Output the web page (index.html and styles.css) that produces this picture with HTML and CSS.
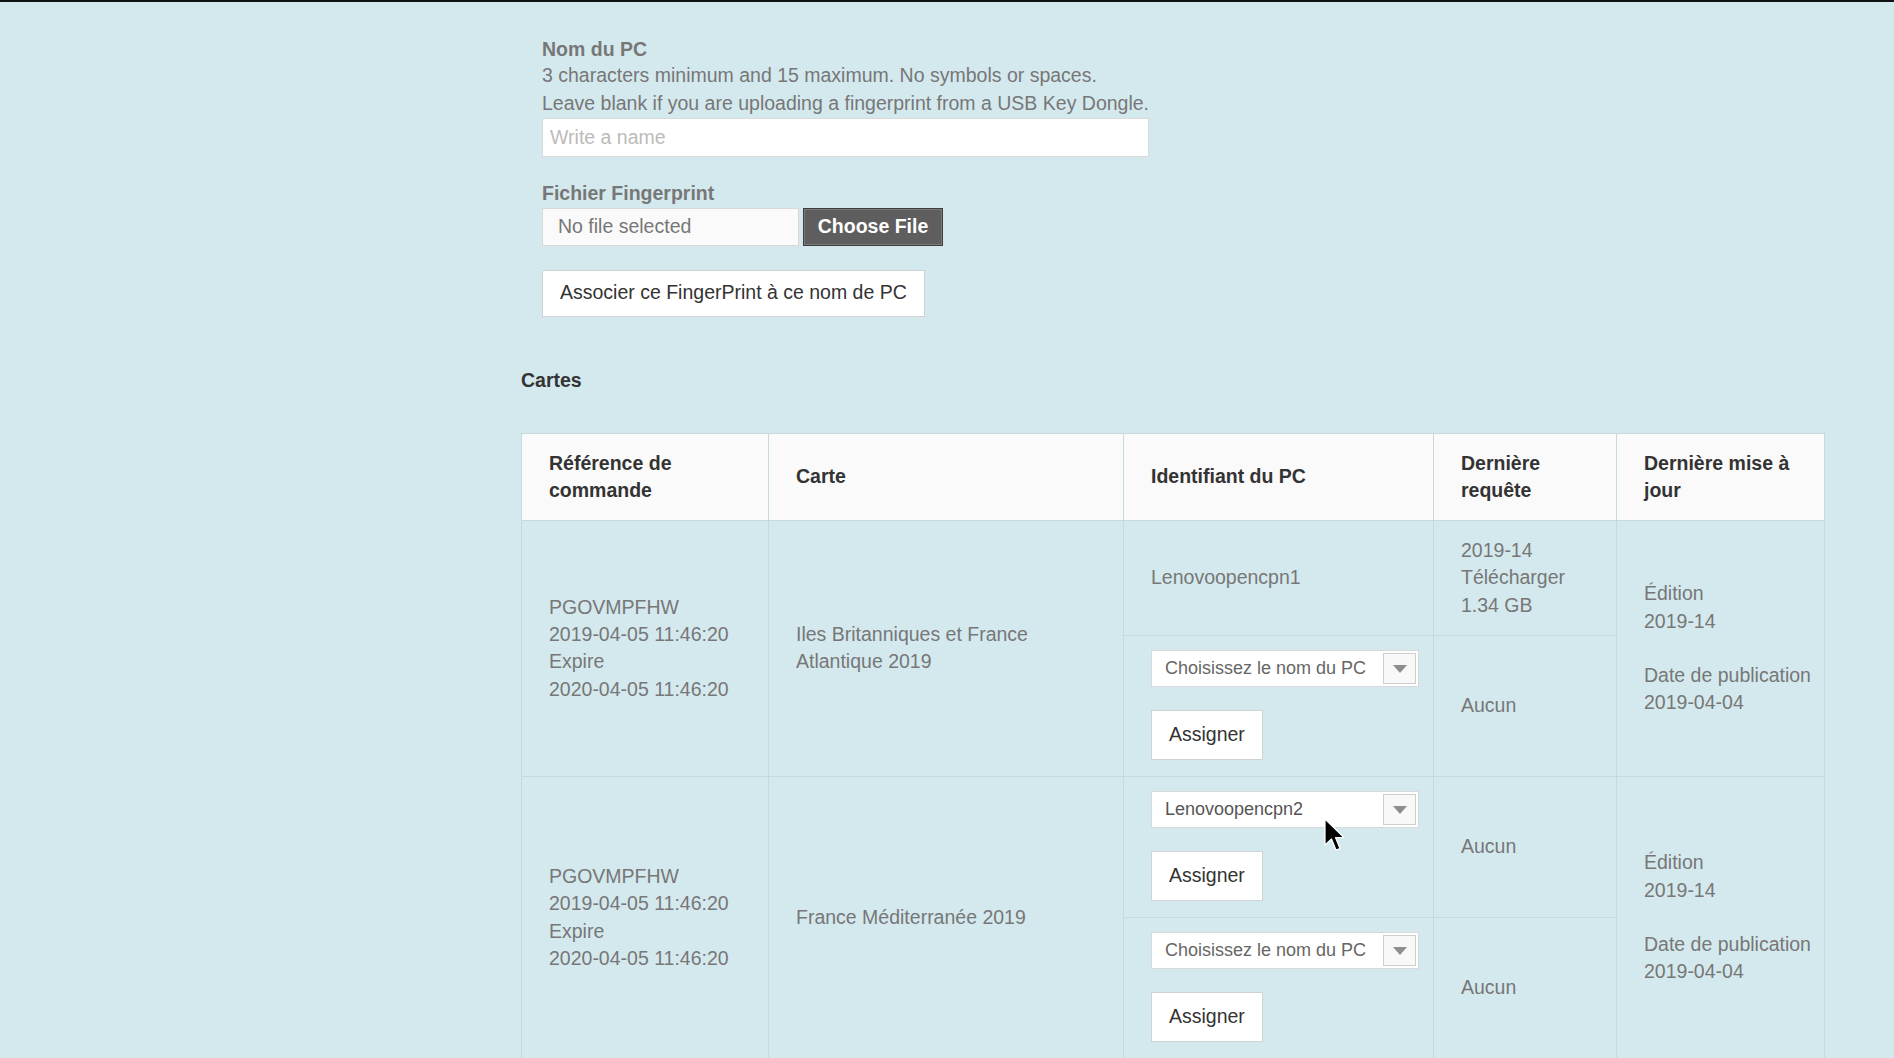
FILE: index.html
```html
<!DOCTYPE html>
<html lang="fr">
<head>
  <meta charset="UTF-8">
  <meta name="viewport" content="width=device-width, initial-scale=1.0">

  <title>Cartes</title>

  <link rel="stylesheet" href="styles.css">
</head>
<body>
  <div class="page">
    <form class="pc">
      <label class="pc__label" for="pcName">Nom du PC</label>
      <p class="pc__help">
        3 characters minimum and 15 maximum. No symbols or spaces.<br>
        Leave blank if you are uploading a fingerprint from a USB Key Dongle.
      </p>
      <input type="text" id="pcName" class="pc__field" placeholder="Write a name">

      <div class="pc__label pc__label--file">Fichier Fingerprint</div>
      <div class="file">
        <span class="file__name">No file selected</span>
        <span class="file__btn">Choose File</span>
      </div>

      <button type="button" class="btn btn--wide">Associer ce FingerPrint à ce nom de PC</button>
    </form>

    <h2 class="title">Cartes</h2>

    <table class="maps">
      <colgroup>
        <col class="maps__col-ref">
        <col class="maps__col-map">
        <col class="maps__col-pc">
        <col class="maps__col-req">
        <col class="maps__col-upd">
      </colgroup>
      <thead>
        <tr>
          <th>Référence de commande</th>
          <th>Carte</th>
          <th>Identifiant du PC</th>
          <th>Dernière requête</th>
          <th>Dernière mise à jour</th>
        </tr>
      </thead>
      <tbody>
        <tr>
          <td rowspan="2">PGOVMPFHW<br>2019-04-05 11:46:20<br>Expire<br>2020-04-05 11:46:20</td>
          <td rowspan="2">Iles Britanniques et France Atlantique 2019</td>
          <td>Lenovoopencpn1</td>
          <td>2019-14<br>Télécharger<br>1.34 GB</td>
          <td rowspan="2">
            <p class="maps__info">Édition<br>2019-14</p>
            <p class="maps__info">Date de publication<br>2019-04-04</p>
          </td>
        </tr>
        <tr>
          <td>
            <div class="picker"><span>Choisissez le nom du PC</span><span class="picker__arrow"></span></div>
            <button type="button" class="btn">Assigner</button>
          </td>
          <td>Aucun</td>
        </tr>

        <tr>
          <td rowspan="2">PGOVMPFHW<br>2019-04-05 11:46:20<br>Expire<br>2020-04-05 11:46:20</td>
          <td rowspan="2">France Méditerranée 2019</td>
          <td>
            <div class="picker picker--set"><span>Lenovoopencpn2</span><span class="picker__arrow"></span></div>
            <button type="button" class="btn">Assigner</button>
          </td>
          <td>Aucun</td>
          <td rowspan="2">
            <p class="maps__info">Édition<br>2019-14</p>
            <p class="maps__info">Date de publication<br>2019-04-04</p>
          </td>
        </tr>
        <tr>
          <td>
            <div class="picker"><span>Choisissez le nom du PC</span><span class="picker__arrow"></span></div>
            <button type="button" class="btn">Assigner</button>
          </td>
          <td>Aucun</td>
        </tr>
      </tbody>
    </table>
  </div>

  <!-- mouse pointer visible in the capture -->
  <svg class="cursor" width="22" height="36" viewBox="0 0 22 36">
    <path d="M1 1 L1 27 L7.5 21 L12 32 L16 30.5 L11.5 19.5 L20 19.5 Z" fill="#000" stroke="#fff" stroke-width="1.2" stroke-linejoin="round"/>
  </svg>
</body>
</html>
```

FILE: styles.css
```css
* {
  box-sizing: border-box;
}

body, html {
  margin: 0;
  padding: 0;
}

body {
  font-family: "Liberation Sans", Arial, sans-serif;
  font-size: 19.5px;
  line-height: 27.4px;
  color: #777;
  background: #d4e9ee;
  border-top: 2px solid #111;
  min-height: 100%;
  position: relative;
}

.page {
  margin-left: 521px;
  width: 1303px;
  padding-top: 34px;
}

.pc {
  margin-left: 21px;
}

.pc__label {
  display: block;
  font-weight: bold;
  color: #777;
}

.pc__label--file {
  margin-top: 23px;
}

.pc__help {
  margin: -1px 0 1px;
}

.pc__field {
  display: block;
  width: 607px;
  height: 39px;
  padding: 0 7px;
  border: 1px solid #d9d9d9;
  background: #fff;
  font: inherit;
  color: #555;
  outline: none;
}

.pc__field::placeholder {
  color: #bbb;
}

.file {
  display: flex;
  gap: 4px;
  margin-top: 0;
}

.file__name {
  width: 257px;
  height: 38px;
  padding: 0 15px;
  display: flex;
  align-items: center;
  background: #fafafa;
  border: 1px solid #d9d9d9;
  color: #777;
}

.file__btn {
  width: 140px;
  height: 38px;
  display: flex;
  justify-content: center;
  align-items: center;
  background: #5f5e5e;
  border: 1px solid #3e3e3e;
  box-shadow: inset 0 0 0 1px #7a7a7a;
  color: #fff;
  font-weight: bold;
}

.btn {
  display: block;
  height: 50px;
  padding: 0 17px;
  background: #fff;
  border: 1px solid #cfd3d4;
  font: inherit;
  color: #333;
  cursor: pointer;
}

.btn--wide {
  height: 47px;
  padding: 0 17px;
  margin-top: 24px;
}

.title {
  margin: 50px 0 39px;
  font-size: 19.5px;
  line-height: 27.4px;
  color: #333;
}

.maps {
  width: 1303px;
  table-layout: fixed;
  border-collapse: collapse;
  border: 1px solid #c6d9de;
}

.maps__col-ref { width: 247px; }
.maps__col-map { width: 355px; }
.maps__col-pc  { width: 310px; }
.maps__col-req { width: 183px; }
.maps__col-upd { width: 208px; }

.maps th,
.maps td {
  padding: 16px 12px 16px 27px;
  border: 1px solid #c6d9de;
  text-align: left;
  vertical-align: middle;
}

.maps th {
  padding-top: 15.5px;
  padding-bottom: 15.5px;
  background: #fafafa;
  color: #333;
  font-weight: bold;
}

.maps__info {
  margin: 0;
}

.maps__info + .maps__info {
  margin-top: 27px;
}

.picker {
  width: 268px;
  height: 37px;
  display: flex;
  align-items: center;
  justify-content: space-between;
  padding: 2px 2px 2px 13px;
  background: #fff;
  border: 1px solid #d6dadb;
  font-size: 18px;
  color: #666;
  margin-top: -2px;
  margin-bottom: 23px;
}

.picker--set {
  color: #555;
}

.picker__arrow {
  width: 33px;
  height: 31px;
  border: 1px solid #cdcdcd;
  background: #f8f8f8;
  position: relative;
}

.picker__arrow::after {
  content: "";
  position: absolute;
  left: 50%;
  top: 50%;
  margin: -4px 0 0 -7px;
  border-left: 7px solid transparent;
  border-right: 7px solid transparent;
  border-top: 8px solid #8e8e8e;
}

.cursor {
  position: absolute;
  left: 1324px;
  top: 816px;
}
```
